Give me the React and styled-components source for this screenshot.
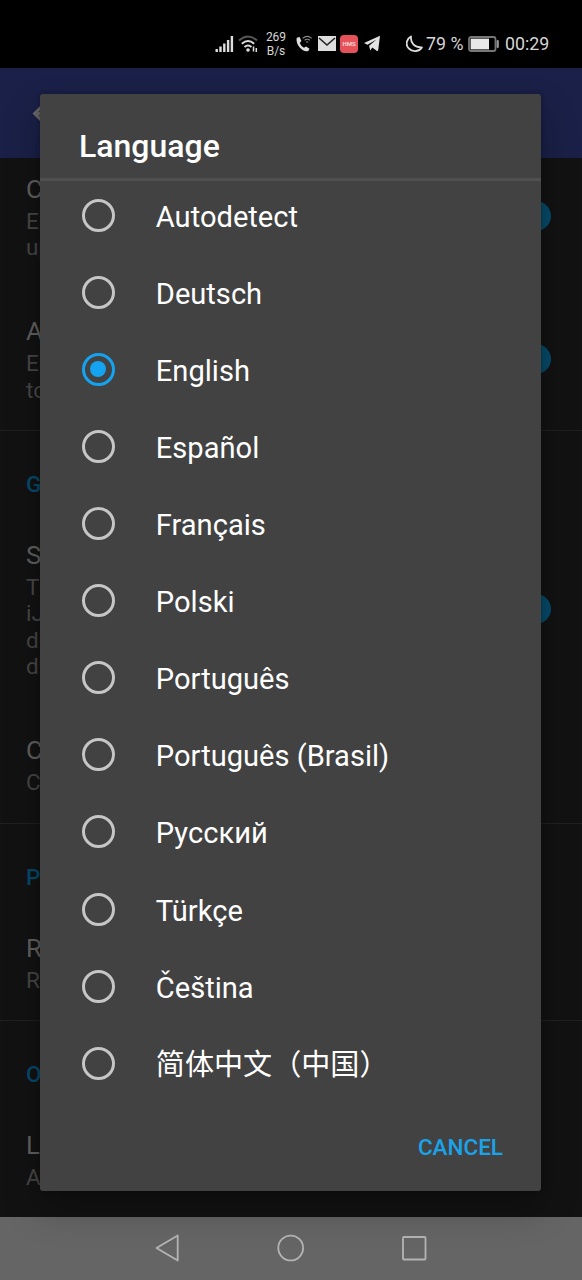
import React from "react";
import styled, { createGlobalStyle } from "styled-components";

const Global = createGlobalStyle`
  * { box-sizing: border-box; }
  body { margin: 0; background: #000; font-family: Roboto, "Noto Sans CJK SC", sans-serif; }
`;

const Screen = styled.div`
  position: relative;
  width: 582px;
  height: 1280px;
  overflow: hidden;
  display: flex;
  flex-direction: column;
  background: #121212;
`;

const StatusBar = styled.header`
  flex: none;
  height: 68px;
  padding: 19px 32px 0 215px;
  display: flex;
  justify-content: space-between;
  background: #000;
  color: #d6d6d6;
`;

const StatusGroup = styled.div`
  display: flex;
  align-items: center;
  height: 49px;
  svg { flex: none; display: block; }
`;

const Speed = styled.div`
  width: 22px;
  margin: 0 9px 0 6px;
  text-align: center;
  font-size: 12px;
  line-height: 14px;
`;

const Hms = styled.span`
  width: 18px;
  height: 18px;
  margin: 0 6px 0 4px;
  border-radius: 4px;
  background: #e5525a;
  color: #fbd5d5;
  font-size: 6px;
  font-weight: 700;
  line-height: 18px;
  text-align: center;
`;

const StatusText = styled.span`
  font-size: 17.8px;
  line-height: 22px;
  white-space: nowrap;
  width: ${(p) => p.$w}px;
`;

const AppBar = styled.div`
  flex: none;
  height: 90px;
  padding-left: 26px;
  display: flex;
  align-items: center;
  background: #1a2047;
`;

const Settings = styled.main`
  flex: 1;
  min-height: 0;
  overflow: hidden;
`;

const Section = styled.section`
  border-bottom: 1px solid #202020;
  &:last-child { border-bottom: 0; }
`;

const Category = styled.h2`
  margin: 0;
  padding: 38px 26px 12.4px;
  font-size: 22.5px;
  line-height: 30px;
  font-weight: 500;
  color: #06486a;
`;

const Preference = styled.div`
  display: flex;
  align-items: center;
  justify-content: space-between;
  padding: ${(p) => (p.$first ? 14 : 26.5)}px 31px 27.5px 26px;
`;

const PrefTitle = styled.div`
  font-size: 25.7px;
  line-height: 34px;
  margin-bottom: 2px;
  color: #5f5f5f;
`;

const PrefSummary = styled.div`
  font-size: 22.5px;
  line-height: 26.2px;
  color: #454545;
`;

const Track = styled.span`
  width: 54px;
  height: 22px;
  border-radius: 11px;
  background: #0b2a39;
  display: flex;
  align-items: center;
  justify-content: flex-end;
`;

const Thumb = styled.span`
  flex: none;
  width: 30px;
  height: 30px;
  border-radius: 50%;
  background: #064866;
`;

const NavBar = styled.nav`
  flex: none;
  height: 63px;
  padding-bottom: 1px;
  background: #656565;
  display: flex;
  align-items: center;
  justify-content: center;
  gap: 95px;
  svg { display: block; }
`;

const Dialog = styled.div`
  position: absolute;
  left: 40px;
  top: 94px;
  width: 501px;
  height: 1097px;
  border-radius: 3px;
  background: #424242;
  color: #fff;
  box-shadow: 0 18px 36px rgba(0, 0, 0, 0.26), 0 0 5px rgba(0, 0, 0, 0.25);
  display: flex;
  flex-direction: column;
`;

const DialogTitle = styled.h1`
  margin: 0;
  height: 87px;
  padding: 33px 39px 0;
  border-bottom: 3px solid #505050;
  font-size: 32px;
  line-height: 38px;
  font-weight: 500;
`;

const Options = styled.div`
  margin-top: -4.4px;
`;

const Option = styled.label`
  display: flex;
  align-items: center;
  height: 77.1px;
  padding-left: 41.5px;
  gap: 41.3px;
  font-size: 29.1px;
`;

const OptionText = styled.span`
  line-height: 34px;
  padding-top: 3px;
  white-space: nowrap;
`;

const Radio = styled.span`
  width: 33px;
  height: 33px;
  border-radius: 50%;
  border: 3.4px solid ${(p) => (p.$on ? "#14a3f0" : "#c6c6c6")};
  display: grid;
  place-items: center;
  &::after {
    content: "";
    width: 16px;
    height: 16px;
    border-radius: 50%;
    background: ${(p) => (p.$on ? "#14a3f0" : "transparent")};
  }
`;

const Actions = styled.div`
  margin-top: auto;
  height: 88px;
  padding-right: 38px;
  display: flex;
  justify-content: flex-end;
  align-items: center;
`;

const TextButton = styled.button`
  border: 0;
  padding: 0;
  background: none;
  color: #1aa3e8;
  font: 500 22.5px/28px Roboto, sans-serif;
`;

const languages = [
  "Autodetect", "Deutsch", "English", "Español", "Français", "Polski",
  "Português", "Português (Brasil)", "Русский", "Türkçe", "Čeština", "简体中文（中国）",
];

const sections = [
  { items: [
    { title: "C", lines: ["E", "up"], toggle: true },
    { title: "A", lines: ["E", "to"], toggle: true },
  ] },
  { name: "G", items: [
    { title: "S", lines: ["T", "iJ", "d", "d"], toggle: true },
    { title: "C", lines: ["C"] },
  ] },
  { name: "P", items: [{ title: "R", lines: ["R"] }] },
  { name: "O", items: [{ title: "L", lines: ["A"] }] },
];

const Signal = () => (
  <svg width="19" height="18" viewBox="0 0 19 18" fill="#dedede">
    <rect x="0.5" y="14" width="2.4" height="3" />
    <rect x="4.3" y="11.5" width="2.4" height="5.5" />
    <rect x="8.1" y="8.5" width="2.4" height="8.5" />
    <rect x="11.9" y="5" width="2.4" height="12" />
    <rect x="15.7" y="1" width="2.4" height="16" />
  </svg>
);

const WifiIcon = styled.svg`
  margin-left: 4px;
`;

const Wifi = () => (
  <WifiIcon width="21" height="18" viewBox="0 0 21 18" fill="none" strokeWidth="2">
    <path d="M1 5.5Q10 -2.5 19 5.5" stroke="#555" />
    <path d="M3.8 8.8Q10 3.3 16.2 8.8" stroke="#dedede" />
    <path d="M6.5 12Q10 9 13.5 12" stroke="#dedede" />
    <circle cx="10" cy="15" r="1.8" fill="#dedede" />
    <path d="M15.5 11.5v5M18.3 13v4" stroke="#dedede" strokeWidth="1.5" />
  </WifiIcon>
);

const Call = () => (
  <svg width="18" height="18" viewBox="0 0 18 18" fill="none">
    <path d="M.8 2.8 3.6 2l1.8 4-1.7 2q1.2 3 4.2 4.8l2.2-1.4 3.4 2.3-1.2 2.3C6.5 17.8-.9 9.5.8 2.8Z" fill="#dedede" />
    <path d="M6.7 3.3Q11.2-.5 15.7 3.3M8.6 5.3q2.6-2.1 5.2 0M10.2 7.2q1-.8 2 0" stroke="#8a8a8a" strokeWidth="1.1" />
  </svg>
);

const MailIcon = styled.svg`
  margin-left: 4px;
`;

const Mail = () => (
  <MailIcon width="18" height="15" viewBox="0 0 18 15">
    <rect width="18" height="15" fill="#dedede" />
    <path d="m1 2 8 7 8-7" fill="none" stroke="#222" strokeWidth="1.6" />
  </MailIcon>
);

const Plane = () => (
  <svg width="18" height="17" viewBox="0 0 18 17" fill="#e2e2e2">
    <path d="M0 8 16 .8 14.2 15.3q-.4 1.3-1.6.5L8.3 12.6 6.2 15.6 5.1 10.7 12.5 4.5 3.5 9.7Z" />
  </svg>
);

const MoonIcon = styled.svg`
  margin-right: 1px;
`;

const Moon = () => (
  <MoonIcon width="19" height="18" viewBox="0 0 19 18" fill="none" stroke="#dedede" strokeWidth="1.8" strokeLinejoin="round">
    <path d="M5 1.5C0 4-.6 10 2.7 13.4 6.2 17.3 12.7 17 15.9 12.4 8.9 12.8 4.2 8.5 5 1.5Z" />
  </MoonIcon>
);

const BatteryIcon = styled.svg`
  margin: 0 6px 0 4px;
`;

const Battery = () => (
  <BatteryIcon width="31" height="16" viewBox="0 0 31 16">
    <rect x="1" y="1" width="26.5" height="14" rx="2" fill="#000" stroke="#777" strokeWidth="1.8" />
    <rect x="2.6" y="2.6" width="18.4" height="10.8" fill="#e8e8e8" />
    <rect x="28.6" y="4" width="2.2" height="8" rx="1" fill="#999" />
  </BatteryIcon>
);

export default function App() {
  return (
    <Screen>
      <Global />
      <StatusBar>
        <StatusGroup>
          <Signal />
          <Wifi />
          <Speed>269<br />B/s</Speed>
          <Call />
          <Mail />
          <Hms>HMS</Hms>
          <Plane />
        </StatusGroup>
        <StatusGroup>
          <Moon />
          <StatusText $w={38}>79 %</StatusText>
          <Battery />
          <StatusText $w={45}>00:29</StatusText>
        </StatusGroup>
      </StatusBar>
      <AppBar>
        <svg width="39" height="39" viewBox="0 0 24 24" fill="#666">
          <path d="M20 11H7.83l5.59-5.59L12 4l-8 8 8 8 1.41-1.41L7.83 13H20v-2z" />
        </svg>
      </AppBar>
      <Settings>
        {sections.map((section, s) => (
          <Section key={s}>
            {section.name && <Category>{section.name}</Category>}
            {section.items.map((item, i) => (
              <Preference key={i} $first={s === 0 && i === 0}>
                <div>
                  <PrefTitle>{item.title}</PrefTitle>
                  {item.lines.map((line, n) => <PrefSummary key={n}>{line}</PrefSummary>)}
                </div>
                {item.toggle && <Track><Thumb /></Track>}
              </Preference>
            ))}
          </Section>
        ))}
      </Settings>
      <NavBar>
        <svg width="28" height="30" viewBox="0 0 28 30" fill="none" stroke="#b4b4b4" strokeWidth="1.8" strokeLinejoin="round">
          <path d="M23.7 2.5v25L2.5 15Z" />
        </svg>
        <svg width="28" height="28" viewBox="0 0 28 28" fill="none" stroke="#b4b4b4" strokeWidth="1.8">
          <circle cx="13.7" cy="14" r="12.4" />
        </svg>
        <svg width="28" height="28" viewBox="0 0 28 28" fill="none" stroke="#b4b4b4" strokeWidth="1.8">
          <rect x="3" y="3" width="22.5" height="22.5" rx="1" />
        </svg>
      </NavBar>
      <Dialog role="dialog">
        <DialogTitle>Language</DialogTitle>
        <Options>
          {languages.map((name) => (
            <Option key={name}>
              <Radio $on={name === "English"} />
              <OptionText>{name}</OptionText>
            </Option>
          ))}
        </Options>
        <Actions>
          <TextButton>CANCEL</TextButton>
        </Actions>
      </Dialog>
    </Screen>
  );
}
